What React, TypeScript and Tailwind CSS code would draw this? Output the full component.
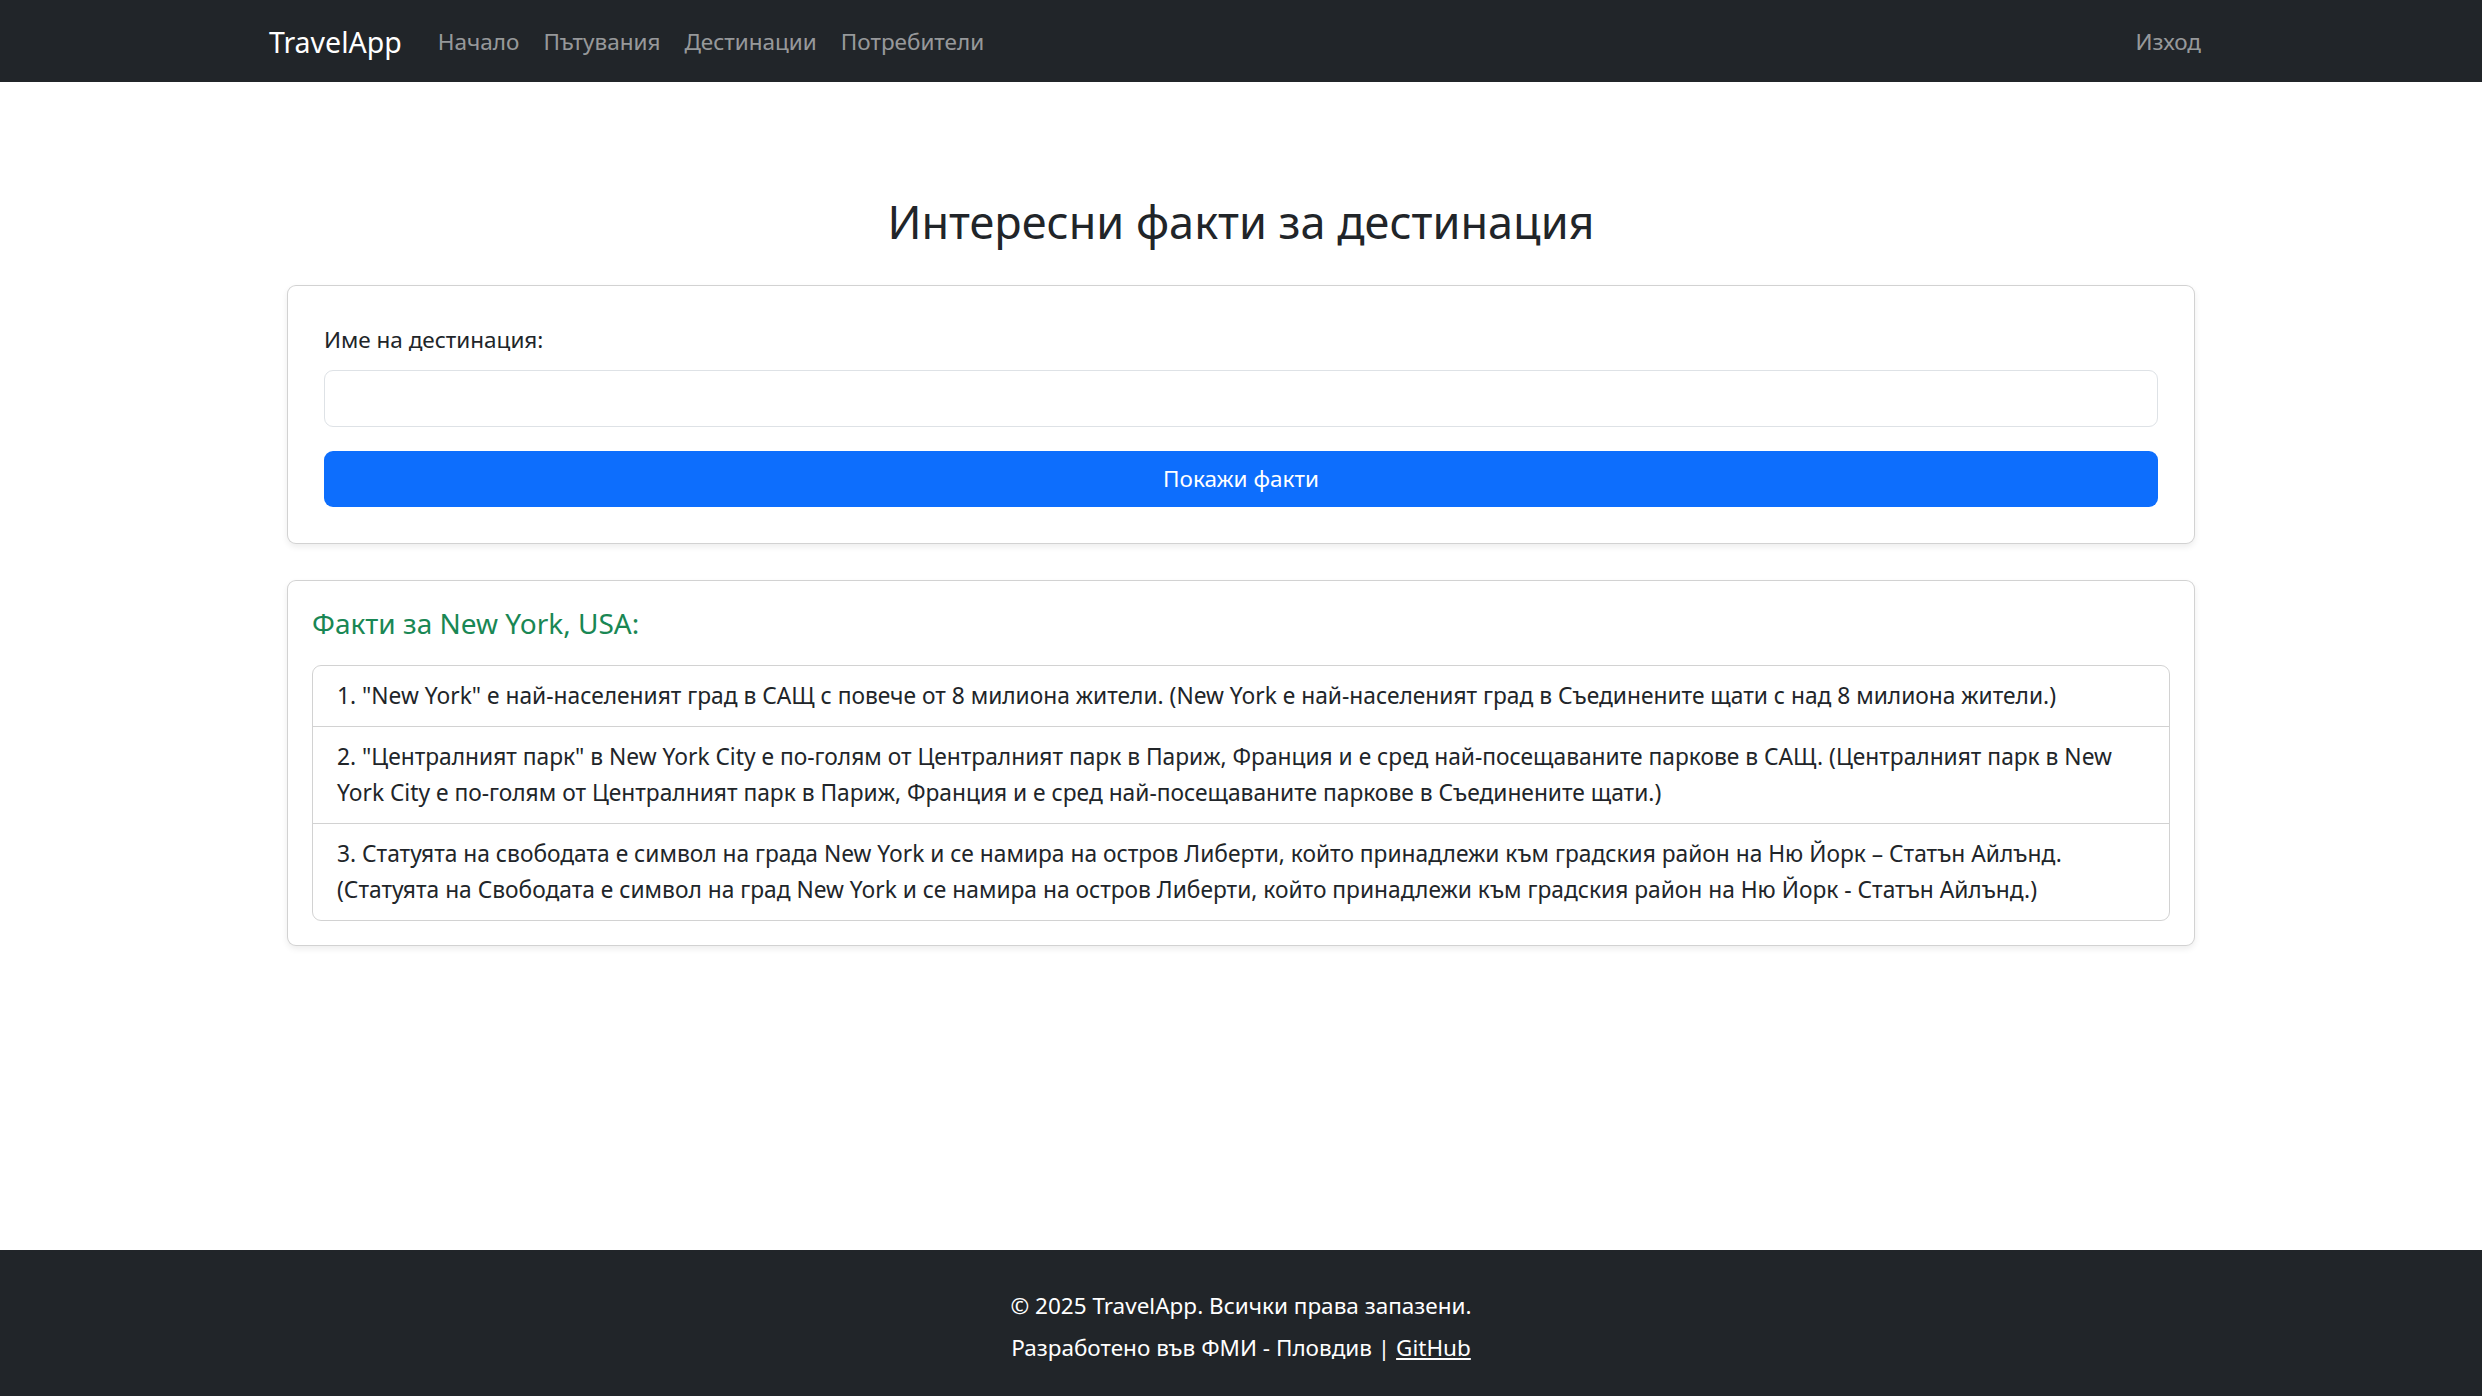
const facts = [
  '1. "New York" е най-населеният град в САЩ с повече от 8 милиона жители. (New York е най-населеният град в Съединените щати с над 8 милиона жители.)',
  '2. "Централният парк" в New York City е по-голям от Централният парк в Париж, Франция и е сред най-посещаваните паркове в САЩ. (Централният парк в New York City е по-голям от Централният парк в Париж, Франция и е сред най-посещаваните паркове в Съединените щати.)',
  "3. Статуята на свободата е символ на града New York и се намира на остров Либерти, който принадлежи към градския район на Ню Йорк – Статън Айлънд. (Статуята на Свободата е символ на град New York и се намира на остров Либерти, който принадлежи към градския район на Ню Йорк - Статън Айлънд.)",
]

const navLinks = ["Начало", "Пътувания", "Дестинации", "Потребители"]

export default function App() {
  return (
    <div className="flex min-h-screen flex-col bg-white font-['Noto_Sans',sans-serif] text-[22.5px] leading-[36px] text-[#212529]">
      <nav className="bg-[#212529]">
        <div className="mx-auto flex h-[82px] w-[1980px] items-center px-[18px] pt-[2px]">
          <a className="mr-[24px] text-[28.5px] text-white">TravelApp</a>
          <ul className="flex">
            {navLinks.map((link) => (
              <li key={link}>
                <a className="px-[12px] text-[rgba(255,255,255,0.55)]">{link}</a>
              </li>
            ))}
          </ul>
          <a className="ml-auto px-[12px] text-[rgba(255,255,255,0.55)]">Изход</a>
        </div>
      </nav>

      <main className="mx-auto w-[1980px] px-[18px] pt-[111px] pb-[36px]">
        <div className="px-[18px]">
          <h2 className="mb-[34px] text-center text-[45px] leading-[57.6px]">
            Интересни факти за дестинация
          </h2>

          <div className="rounded-[9px] border border-[rgba(0,0,0,0.175)] bg-white p-[36px] shadow-[0_3px_6px_rgba(0,0,0,0.075)]">
            <label className="mb-[12px] block">Име на дестинация:</label>
            <input
              type="text"
              className="block h-[57px] w-full rounded-[9px] border border-[#dee2e6] px-[18px] outline-none"
            />
            <button className="mt-[24px] h-[56px] w-full rounded-[9px] bg-[#0d6efd] text-white">
              Покажи факти
            </button>
          </div>

          <div className="mt-[36px] rounded-[9px] border border-[rgba(0,0,0,0.175)] bg-white p-[24px] shadow-[0_3px_6px_rgba(0,0,0,0.075)]">
            <h5 className="mb-[24px] text-[28px] leading-[36px] text-[#198754]">
              Факти за New York, USA:
            </h5>
            <ul className="overflow-hidden rounded-[9px] border border-[rgba(0,0,0,0.175)]">
              {facts.map((fact, i) => (
                <li
                  key={i}
                  className="border-t border-[rgba(0,0,0,0.175)] px-[24px] py-[12px] text-[22.75px] first:border-t-0"
                >
                  {fact}
                </li>
              ))}
            </ul>
          </div>
        </div>
      </main>

      <footer className="mt-auto bg-[#212529] pt-[38px] pb-[30px] text-center text-white">
        <p className="mb-[6px]">© 2025 TravelApp. Всички права запазени.</p>
        <p>
          Разработено във ФМИ - Пловдив | <a className="underline">GitHub</a>
        </p>
      </footer>
    </div>
  )
}
